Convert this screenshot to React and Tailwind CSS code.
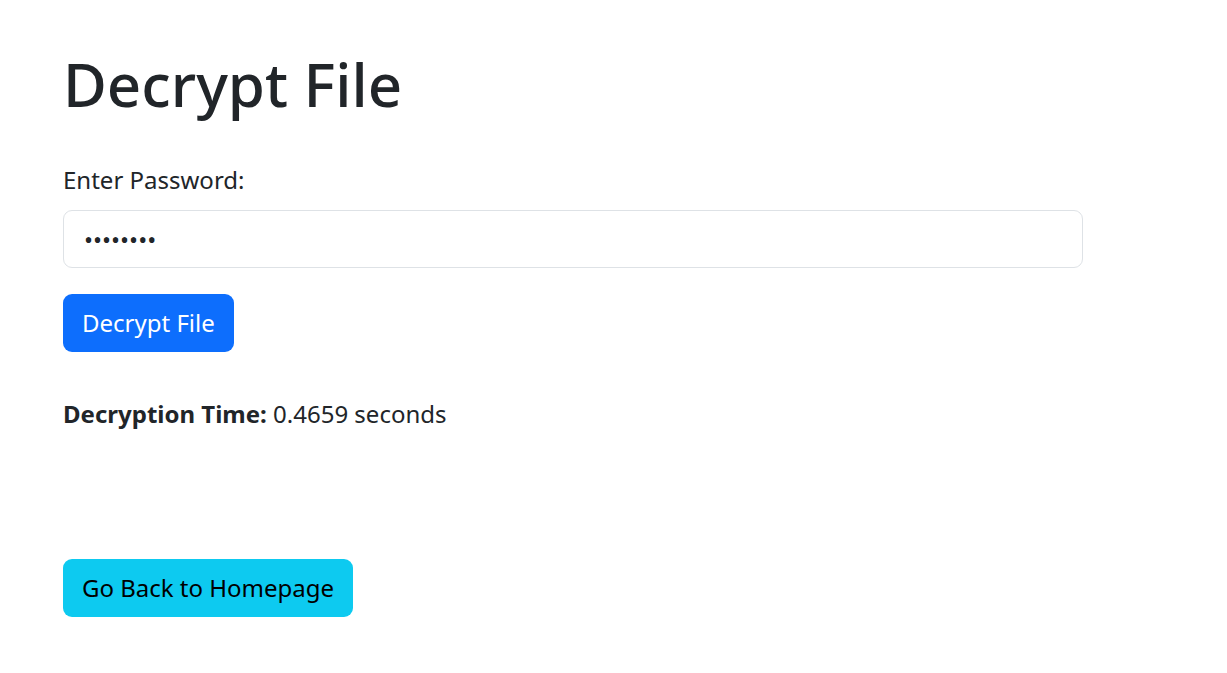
import { useState } from "react";

export default function App() {
  const [passwort, setPasswort] = useState("secret12");

  return (
    <div className="min-h-screen bg-white text-[#212529] font-['Noto_Sans',sans-serif] text-[24px] leading-[1.5]">
      <div className="pl-[63px] pt-[48px] w-[1083px]">
        <h1 className="text-[60px] leading-[1.2] font-medium mb-[42px]">Decrypt File</h1>

        <label htmlFor="pw" className="block mb-[12px]">Enter Password:</label>
        <input
          id="pw"
          type="password"
          value={passwort}
          onChange={e => setPasswort(e.target.value)}
          className="block w-full h-[58px] rounded-[9px] border border-[#dee2e6] px-[20px] text-[24px] outline-none"
        />

        <button className="mt-[26px] h-[58px] rounded-[9px] bg-[#0d6efd] px-[19px] text-white">
          Decrypt File
        </button>

        <p className="mt-[44px]">
          <strong className="font-bold">Decryption Time:</strong> 0.4659 seconds
        </p>

        <button className="mt-[127px] h-[58px] rounded-[9px] bg-[#0dcaf0] px-[19px] text-black">
          Go Back to Homepage
        </button>
      </div>
    </div>
  );
}
